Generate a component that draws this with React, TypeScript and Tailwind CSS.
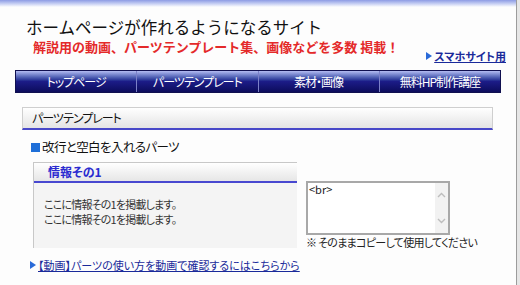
const jp = "font-['Noto_Sans_CJK_JP','Noto_Sans',sans-serif]";
const palt = "[font-feature-settings:'palt']";

const navItems = ['トップページ', 'パーツテンプレート', '素材・画像', '無料HP制作講座'];

function Triangle() {
  return <span className="inline-block w-0 h-0 border-y-[4px] border-y-transparent border-l-[6px] border-l-[#2a6ad8] mr-[2px]" />;
}

export default function App() {
  return (
    <div className={`w-[520px] h-[285px] overflow-hidden flex bg-[#e6e6e6] ${jp}`}>
      <div className="w-[517px] bg-[#fdfdfd] border-r border-[#9c9c9c] flex flex-col">
        {/* top strip */}
        <div className="h-[7px] bg-gradient-to-b from-[#8d9be4] to-[#fdfdfd]" />

        {/* site header */}
        <div className="pl-[26px] pt-[10px] text-[16.5px] leading-[20px] text-[#111]">
          ホームページが作れるようになるサイト
        </div>
        <div className="flex items-start justify-between pl-[33px] pr-[10px] mt-[1px]">
          <div className="text-[13px] leading-[18px] font-bold text-[#e42a2a]">
            解説用の動画、パーツテンプレート集、画像などを多数 掲載！
          </div>
          <a className={`mt-[11px] flex items-center text-[11px] leading-[14px] font-bold text-[#1a2a9a] underline ${palt}`}>
            <Triangle />
            スマホサイト用
          </a>
        </div>

        {/* nav */}
        <nav className="ml-[15px] mt-[7px] w-[486px] h-[23px] flex border border-[#101050] bg-gradient-to-b from-[#b4bcf2] via-[#1c1c88] to-[#0c0c5c]">
          {navItems.map((t, i) => (
            <div
              key={t}
              className={`flex-1 flex items-center justify-center text-white text-[12px] tracking-[-1px] ${palt} ${i > 0 ? 'border-l border-[#7b80c8]' : ''}`}
            >
              {t}
            </div>
          ))}
        </nav>

        {/* section header */}
        <div className={`ml-[22px] mt-[14px] w-[471px] h-[23px] flex items-center pl-[9px] text-[12px] tracking-[-1px] text-[#111] border border-[#cfcfcf] border-b-2 border-b-[#4848c8] bg-gradient-to-b from-white to-[#e4e4e4] ${palt}`}>
          パーツテンプレート
        </div>

        {/* sub heading */}
        <div className={`ml-[31px] mt-[9px] flex items-center text-[12.5px] leading-[16px] tracking-[-0.6px] text-[#111] ${palt}`}>
          <span className="w-[9px] h-[9px] bg-[#1f6fd8] mr-[2px]" />
          改行と空白を入れるパーツ
        </div>

        {/* parts row */}
        <div className="ml-[33px] mt-[7px] flex items-start gap-[9px]">
          <div className="w-[264px] h-[86px] border-l border-t border-[#c8c8c8] bg-[#f4f4f4] flex flex-col">
            <div className={`h-[20px] flex items-center pl-[14px] text-[12px] font-bold text-[#2a2ad0] border-b-2 border-[#4848d0] bg-gradient-to-b from-white to-[#e6e6e6] ${palt}`}>
              情報その1
            </div>
            <div className={`pl-[10px] pt-[14px] text-[11px] leading-[15px] tracking-[-0.8px] text-[#333] ${palt}`}>
              <div>ここに情報その1を掲載します。</div>
              <div>ここに情報その1を掲載します。</div>
            </div>
          </div>
          <div className="flex flex-col pt-[19px]">
            <div className="w-[144px] h-[54px] border-2 border-[#a8a8a8] bg-white flex">
              <div className="flex-1 pl-[1px] text-[11px] leading-[13px] text-[#222]">&lt;br&gt;</div>
              <div className="w-[13px] bg-[#f2f2f2] flex flex-col items-center justify-between py-[9px]">
                <svg width="9" height="6" viewBox="0 0 9 6"><path d="M1 5 L4.5 1.5 L8 5" fill="none" stroke="#bdbdbd" strokeWidth="1.4" /></svg>
                <svg width="9" height="6" viewBox="0 0 9 6"><path d="M1 1 L4.5 4.5 L8 1" fill="none" stroke="#bdbdbd" strokeWidth="1.4" /></svg>
              </div>
            </div>
            <div className={`text-[11px] leading-[14px] tracking-[-0.7px] text-[#222] ${palt}`}>
              ※ そのままコピーして使用してください
            </div>
          </div>
        </div>

        {/* video link */}
        <a className={`ml-[30px] mt-[9px] flex items-center text-[11px] leading-[14px] text-[#1a2a9a] ${palt}`}>
          <Triangle />
          <span className="underline">【動画】パーツの使い方を動画で確認するにはこちらから</span>
        </a>
      </div>
    </div>
  );
}
